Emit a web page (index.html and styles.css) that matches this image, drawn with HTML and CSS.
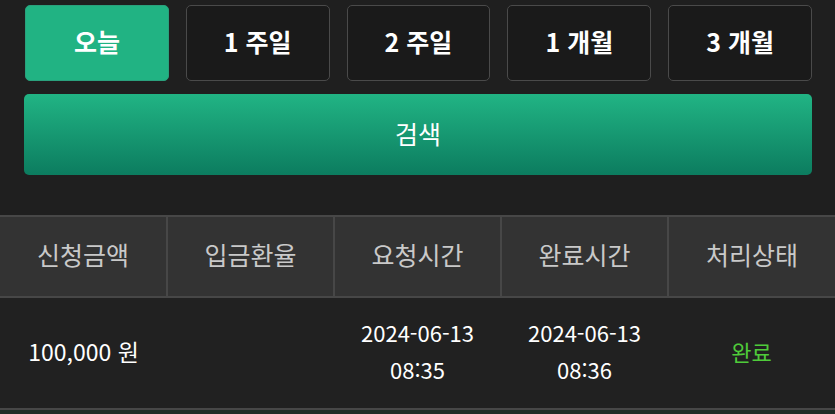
FILE: index.html
```html
<!DOCTYPE html>
<html lang="ko">
<head>
  <meta charset="UTF-8">
  <meta name="viewport" content="width=device-width, initial-scale=1.0">
  <title>입금내역</title>
  <link rel="stylesheet" href="styles.css">
</head>
<body>
  <div class="container">
    <div class="period">
      <button type="button" class="period-btn active">오늘</button>
      <button type="button" class="period-btn">1 주일</button>
      <button type="button" class="period-btn">2 주일</button>
      <button type="button" class="period-btn">1 개월</button>
      <button type="button" class="period-btn">3 개월</button>
    </div>
    <button type="button" class="search-btn">검색</button>
  </div>
  <table class="history">
    <thead>
      <tr>
        <th>신청금액</th>
        <th>입금환율</th>
        <th>요청시간</th>
        <th>완료시간</th>
        <th>처리상태</th>
      </tr>
    </thead>
    <tbody>
      <tr>
        <td class="amount">100,000 원</td>
        <td></td>
        <td>2024-06-13<br>08:35</td>
        <td>2024-06-13<br>08:36</td>
        <td class="done">완료</td>
      </tr>
    </tbody>
  </table>
  <div class="next-row"></div>
</body>
</html>
```

FILE: styles.css
```css
body {
  font-family: "Noto Sans CJK KR", "Noto Sans", sans-serif;
  margin: 0;
  padding: 0;
  background-color: #1f1f1f;
  color: #fff;
  overflow: hidden;
}
.container {
  padding: 5px 23px 0 24px;
}
.period {
  display: grid;
  grid-template-columns: repeat(5, 1fr);
  gap: 17px;
  padding-left: 1px;
}
.period-btn {
  height: 76px;
  padding: 0 0 4px;
  background: #1a1a1a;
  border: 1px solid #4a4a4a;
  border-radius: 5px;
  color: #fff;
  font-family: inherit;
  font-size: 25px;
  font-weight: bold;
  cursor: pointer;
}
.period-btn.active {
  background: #21b383;
  border-color: #2aa07c;
}
.search-btn {
  display: block;
  width: 100%;
  height: 81px;
  margin-top: 13px;
  padding: 0 0 4px;
  border: none;
  border-radius: 5px;
  background: linear-gradient(#21b484, #0c7c5f);
  color: #fff;
  font-family: inherit;
  font-size: 25px;
  cursor: pointer;
}
.history {
  width: 100%;
  margin-top: 40px;
  border-collapse: collapse;
  table-layout: fixed;
}
.history th {
  height: 74px;
  padding: 0 0 5px;
  background: #333;
  color: #c9c9c9;
  font-size: 25px;
  font-weight: normal;
  border-top: 2px solid #474747;
  border-bottom: 2px solid #474747;
  border-left: 2px solid #474747;
}
.history th:first-child { border-left: none; }
.history td {
  height: 106px;
  padding: 0 0 4px;
  background: #212121;
  text-align: center;
  font-size: 22px;
  line-height: 37px;
  border-bottom: 2px solid #474747;
}
.history td.amount { font-size: 23px; }
.history td.done { color: #4fcb3a; }
.next-row {
  height: 20px;
  background: #1f2d28;
}
```
